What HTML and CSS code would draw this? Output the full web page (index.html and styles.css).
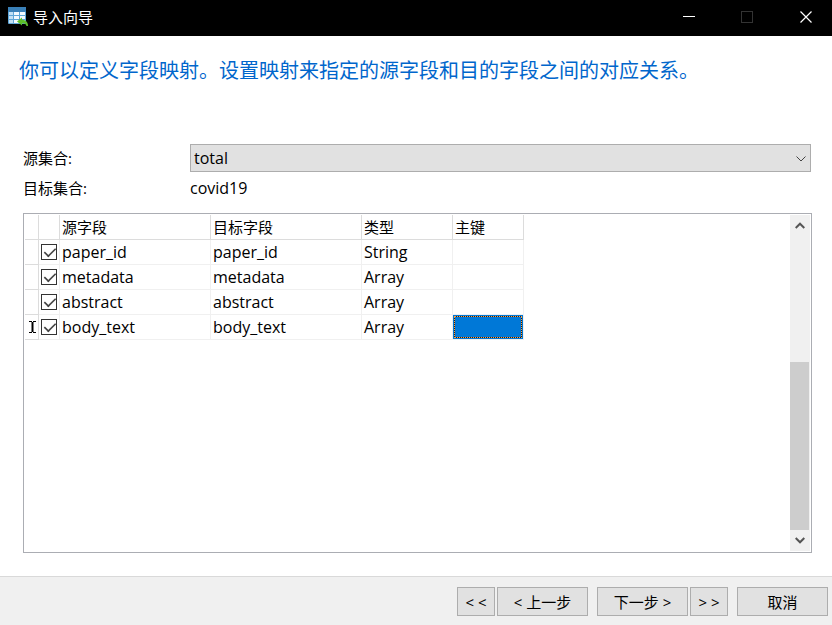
FILE: index.html
```html
<!DOCTYPE html>
<html lang="zh-CN">
<head>
<meta charset="utf-8">
<title>导入向导</title>
<link rel="stylesheet" href="styles.css">
</head>
<body>
<header class="titlebar">
  <svg class="app-icon" width="20" height="20" viewBox="0 0 20 20" aria-hidden="true">
    <rect x="0" y="0" width="18" height="17" rx="1" fill="#5fa6d8"/>
    <rect x="0" y="0" width="18" height="5" rx="1" fill="#3a80b8"/>
    <path fill="#c3e0f5" d="M1 5h4v3H1zM1 9h4v3H1zM1 13h4v3H1z"/>
    <path fill="#f4faff" d="M6 5h5v3H6zM12 5h5v3h-5zM6 9h5v3H6zM12 9h5v3h-5zM6 13h5v3H6zM12 13h5v3h-5z"/>
    <path fill="#5cbf2a" d="M9 14.500L14 10.500v2.300c4 .2 6 2.700 6 6.200h-1.500c-.5-2-2-2.700-4.500-2.700V18.500z"/>
  </svg>
  <h1 class="window-title">导入向导</h1>
  <div class="window-controls">
    <button type="button" class="window-button" aria-label="最小化">
      <svg width="12" height="12" viewBox="0 0 12 12"><path d="M0 5.500h12" stroke="#fff"/></svg>
    </button>
    <button type="button" class="window-button" aria-label="最大化" disabled>
      <svg width="12" height="12" viewBox="0 0 12 12"><rect x=".5" y=".5" width="11" height="11" fill="none" stroke="#333"/></svg>
    </button>
    <button type="button" class="window-button" aria-label="关闭">
      <svg width="12" height="12" viewBox="0 0 12 12"><path d="M.5 .5l11 11M11.500 .5l-11 11" stroke="#fff" stroke-width="1.200"/></svg>
    </button>
  </div>
</header>

<main class="content">
  <p class="intro">你可以定义字段映射。设置映射来指定的源字段和目的字段之间的对应关系。</p>

  <div class="form">
    <label for="source">源集合:</label>
    <div class="select-box">
      <select id="source"><option>total</option></select>
      <svg class="select-arrow" width="10" height="6" viewBox="0 0 10 6" aria-hidden="true"><path d="M.5 .5L5 5 9.500 .5" fill="none" stroke="#444"/></svg>
    </div>
    <span>目标集合:</span>
    <span class="value">covid19</span>
  </div>

  <div class="grid-panel">
    <div class="grid-body">
      <table class="mapping">
        <colgroup><col class="c-mark"><col class="c-check"><col class="c-field"><col class="c-field"><col class="c-type"><col class="c-key"></colgroup>
        <thead>
          <tr><th></th><th></th><th>源字段</th><th>目标字段</th><th>类型</th><th>主键</th></tr>
        </thead>
        <tbody>
          <tr><td></td><td class="check"><input type="checkbox" checked aria-label="paper_id"></td><td>paper_id</td><td>paper_id</td><td>String</td><td></td></tr>
          <tr><td></td><td class="check"><input type="checkbox" checked aria-label="metadata"></td><td>metadata</td><td>metadata</td><td>Array</td><td></td></tr>
          <tr><td></td><td class="check"><input type="checkbox" checked aria-label="abstract"></td><td>abstract</td><td>abstract</td><td>Array</td><td></td></tr>
          <tr><td class="mark"><svg width="7" height="12" viewBox="0 0 7 12" aria-hidden="true"><path d="M0 .5h3M4 .5h3M0 11.500h3M4 11.500h3" stroke="#000"/><path d="M3.500 1v10" stroke="#000" stroke-width="2"/></svg></td><td class="check"><input type="checkbox" checked aria-label="body_text"></td><td>body_text</td><td>body_text</td><td>Array</td><td class="selected"><div class="focus"></div></td></tr>
        </tbody>
      </table>
    </div>
    <div class="scrollbar">
      <button type="button" class="scroll-button" aria-label="向上滚动"><svg width="10" height="7" viewBox="0 0 10 7"><path d="M.7 6L5 1.700 9.300 6" fill="none" stroke="#555" stroke-width="2"/></svg></button>
      <div class="track"><div class="thumb"></div></div>
      <button type="button" class="scroll-button" aria-label="向下滚动"><svg width="10" height="7" viewBox="0 0 10 7"><path d="M.7 1L5 5.300 9.300 1" fill="none" stroke="#555" stroke-width="2"/></svg></button>
    </div>
  </div>
</main>

<footer class="actions">
  <div class="pair">
    <button type="button" class="btn small">&lt; &lt;</button>
    <button type="button" class="btn">&lt; 上一步</button>
  </div>
  <div class="pair">
    <button type="button" class="btn">下一步 &gt;</button>
    <button type="button" class="btn small">&gt; &gt;</button>
  </div>
  <button type="button" class="btn">取消</button>
</footer>
</body>
</html>
```
FILE: styles.css
```css
* {
  box-sizing: border-box;
}

body {
  margin: 0;
  min-height: 100vh;
  display: flex;
  flex-direction: column;
  background: #fff;
  color: #000;
  font: 15px/24px "Open Sans", "Noto Sans CJK SC", sans-serif;
}

button,
select {
  font: inherit;
  color: inherit;
}

svg {
  display: block;
}

.titlebar {
  display: flex;
  align-items: center;
  height: 36px;
  padding: 0 0 2px 8px;
  background: #000;
  color: #fff;
}

.window-title {
  margin: 0 0 0 5px;
  font-size: 15px;
  font-weight: 400;
}

.window-controls {
  display: flex;
  align-self: stretch;
  margin-left: auto;
}

.window-button {
  display: flex;
  align-items: center;
  justify-content: center;
  width: 58px;
  margin: 0;
  padding: 0;
  border: 0;
  background: none;
}

.window-button:last-child {
  width: 56px;
  padding-left: 4px;
}

.content {
  flex: 1;
  display: flex;
  flex-direction: column;
  padding: 21px 20px 23px 23px;
}

.intro {
  margin: 0 0 0 -4px;
  font-size: 20px;
  line-height: 28px;
  color: #0066cc;
}

.form {
  display: grid;
  grid-template-columns: 167px 1fr;
  row-gap: 4px;
  align-items: center;
  margin-top: 59px;
  padding-right: 1px;
}

.value {
  font-size: 16px;
}

.select-box {
  position: relative;
}

.select-box select {
  display: block;
  width: 100%;
  height: 28px;
  padding: 0 24px 0 3px;
  appearance: none;
  border: 1px solid #adadad;
  border-radius: 0;
  background: #e1e1e1;
  font-size: 16px;
}

.select-arrow {
  position: absolute;
  right: 5px;
  top: 12px;
  pointer-events: none;
}

.grid-panel {
  flex: 1;
  display: flex;
  margin-top: 13px;
  padding: 1px;
  border: 1px solid #abadb3;
}

.grid-body {
  flex: 1;
}

.mapping {
  width: 499px;
  table-layout: fixed;
  border-collapse: separate;
  border-spacing: 0;
}

.c-mark { width: 14px; }
.c-check { width: 21px; }
.c-field { width: 151px; }
.c-type { width: 91px; }
.c-key { width: 71px; }

.mapping th,
.mapping td {
  height: 25px;
  padding: 0 0 0 2px;
  border-right: 1px solid #f0f0f0;
  border-bottom: 1px solid #f0f0f0;
  font-weight: 400;
  text-align: left;
}

.mapping th {
  border-color: #dcdcdc;
}

.mapping td {
  font-size: 16px;
}

.mapping td:first-child {
  border-color: #dcdcdc;
}

.mapping .check {
  padding: 0 0 0 2px;
}

.mapping .mark {
  padding: 0 0 0 4px;
}

.check input {
  display: block;
  width: 16px;
  height: 16px;
  margin: 0;
  appearance: none;
  border: 1px solid #333;
  background: #fff;
}

.check input:checked::before {
  content: "";
  display: block;
  width: 12px;
  height: 6px;
  margin: 3px 0 0 1px;
  border: solid #444;
  border-width: 0 0 2px 2px;
  transform: translateY(-1px) rotate(-45deg) scale(.8);
}

.mapping .selected {
  padding: 0;
  background: #0078d7 padding-box;
}

.focus {
  height: 24px;
  border: 1px solid #0078d7;
  outline: 1px dotted #ff9e40;
  outline-offset: -2px;
  box-shadow: inset 0 0 0 1px #222;
}

.scrollbar {
  display: flex;
  flex-direction: column;
  width: 20px;
  padding-right: 1px;
  background: #f0f0f0;
}

.scroll-button {
  display: flex;
  align-items: center;
  justify-content: center;
  height: 21px;
  padding: 0;
  border: 0;
  background: none;
}

.track {
  flex: 1;
  display: flex;
  align-items: flex-end;
}

.thumb {
  width: 100%;
  height: 57%;
  background: #cdcdcd;
}

.actions {
  display: flex;
  justify-content: flex-end;
  gap: 9px;
  padding: 10px 4px 9px;
  border-top: 1px solid #d9d9d9;
  background: #f0f0f0;
}

.pair {
  display: flex;
  gap: 2px;
}

.btn {
  width: 91px;
  height: 29px;
  padding: 0;
  border: 1px solid #adadad;
  background: #e1e1e1;
}

.small {
  width: 38px;
}
```
